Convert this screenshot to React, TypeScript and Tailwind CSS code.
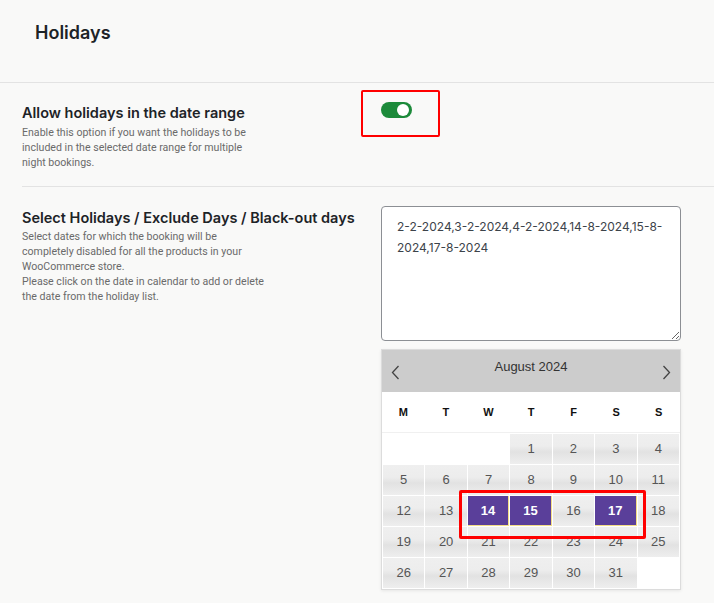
import React from 'react'

const font = { fontFamily: 'Inter, "Noto Sans", sans-serif' }
const descFont = { fontFamily: 'Roboto, "Noto Sans", sans-serif' }
const calFont = { fontFamily: '"Liberation Sans", Arial, sans-serif' }

const dayNames = ['M', 'T', 'W', 'T', 'F', 'S', 'S']
const selected = [14, 15, 17]

function Toggle() {
  return (
    <div className="flex h-[16px] w-[31px] items-center justify-end rounded-full bg-[#1c8a3a] pr-[3px]">
      <div className="h-[12px] w-[12px] rounded-full bg-white" />
    </div>
  )
}

function Chevron({ dir }: { dir: 'left' | 'right' }) {
  return (
    <svg width="9" height="15" viewBox="0 0 9 15" fill="none">
      <path
        d={dir === 'left' ? 'M7.5 1 L1.5 7.5 L7.5 14' : 'M1.5 1 L7.5 7.5 L1.5 14'}
        stroke="#444"
        strokeWidth="1.3"
      />
    </svg>
  )
}

function Calendar() {
  const cells: (number | null)[] = [null, null, null]
  for (let d = 1; d <= 31; d++) cells.push(d)
  cells.push(null)

  return (
    <div
      className="relative w-[300px] border border-[#dcdcdc] bg-white shadow-[0_1px_3px_rgba(0,0,0,0.08)]"
      style={calFont}
    >
      <div className="flex h-[42px] items-center justify-between bg-[#cccccc] px-[9px]">
        <span className="mt-[3px]">
          <Chevron dir="left" />
        </span>
        <span className="mb-[9px] text-[13px] text-[#333]">August 2024</span>
        <span className="mt-[3px]">
          <Chevron dir="right" />
        </span>
      </div>
      <div className="grid h-[40px] grid-cols-7 items-center pt-[1px]">
        {dayNames.map((d, i) => (
          <div key={i} className="text-center text-[11px] font-bold text-[#111]">
            {d}
          </div>
        ))}
      </div>
      <div className="grid grid-cols-7 auto-rows-[30px] gap-[1px] border-t border-[#f0f0f0] p-[1px]">
        {cells.map((d, i) => {
          if (d === null) return <div key={i} className="bg-white" />
          const on = selected.includes(d)
          return (
            <div
              key={i}
              className={
                on
                  ? 'flex items-center justify-center border-r border-b border-[#f3dd86] bg-[#5a3f9a] text-[13px] font-bold text-white'
                  : 'flex items-center justify-center bg-[linear-gradient(#efefef_0%,#ededed_40%,#e2e2e2_60%,#eeeeee_100%)] text-[13px] text-[#555]'
              }
            >
              {d}
            </div>
          )
        })}
      </div>
      <div className="pointer-events-none absolute left-[77px] top-[140px] h-[49px] w-[187px] rounded-[2px] border-[3px] border-[#f00]" />
    </div>
  )
}

export default function App() {
  return (
    <div className="min-h-[603px] w-[714px] bg-[#f9f9f8] text-[#1d2327]" style={font}>
      <div className="h-[83px] border-b border-[#e3e3e3] pl-[35px] pt-[21px]">
        <h1 className="text-[18px] font-semibold leading-[24px] text-[#1d2327]">Holidays</h1>
      </div>

      <div className="ml-[22px] flex h-[104px] border-b border-[#e3e3e3]">
        <div className="w-[339px] pt-[20px]">
          <h2 className="text-[14.5px] font-semibold leading-[20px]">
            Allow holidays in the date range
          </h2>
          <p className="mt-[2px] whitespace-nowrap text-[10.6px] leading-[15px] text-[#6a6a6a]" style={descFont}>
            Enable this option if you want the holidays to be
            <br />
            included in the selected date range for multiple
            <br />
            night bookings.
          </p>
        </div>
        <div className="mt-[7px] h-[47px] w-[79px] rounded-[2px] border-2 border-[#f00] pl-[18px] pt-[10px]">
          <Toggle />
        </div>
      </div>

      <div className="ml-[22px] flex pt-[19px]">
        <div className="w-[359px] pt-[2px]">
          <h2 className="text-[14.5px] font-semibold leading-[20px]">
            Select Holidays / Exclude Days / Black-out days
          </h2>
          <p className="mt-[1px] whitespace-nowrap text-[10.6px] leading-[15px] text-[#6a6a6a]" style={descFont}>
            Select dates for which the booking will be
            <br />
            completely disabled for all the products in your
            <br />
            WooCommerce store.
            <br />
            Please click on the date in calendar to add or delete
            <br />
            the date from the holiday list.
          </p>
        </div>
        <div className="flex flex-col gap-[8px]">
          <textarea
            readOnly
            className="h-[135px] w-[300px] resize-y rounded-[4px] border border-[#8c8f94] bg-white pl-[15px] pr-[6px] pt-[9px] text-[12px] leading-[21px] text-[#3c434a] outline-none"
            defaultValue="2-2-2024,3-2-2024,4-2-2024,14-8-2024,15-8-2024,17-8-2024"
          />
          <Calendar />
        </div>
      </div>
    </div>
  )
}
